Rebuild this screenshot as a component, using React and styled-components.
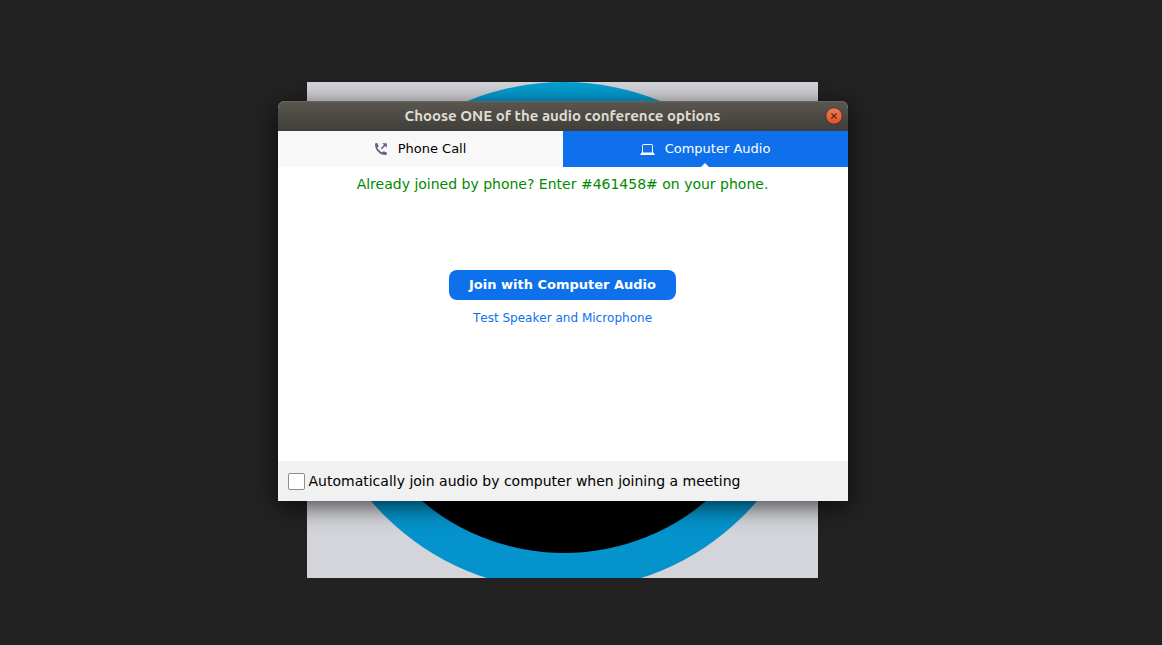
import React from "react";
import styled, { createGlobalStyle } from "styled-components";

const GlobalStyle = createGlobalStyle`
  * {
    box-sizing: border-box;
  }

  body {
    margin: 0;
    background: #222222;
    font-family: "DejaVu Sans", sans-serif;
    color: #000000;
  }

  button {
    font-family: inherit;
    border: 0;
    padding: 0;
    cursor: pointer;
  }
`;

const Page = styled.main`
  display: grid;
  grid-template-columns: minmax(0, 1fr);
  justify-items: center;
  align-items: start;
  min-height: 100vh;
  padding: 82px 37px 36px 0;
`;

const Avatar = styled.svg`
  grid-area: 1 / 1;
  display: block;
  width: 100%;
  max-width: 511px;
  height: auto;
`;

const Dialog = styled.section`
  grid-area: 1 / 1;
  z-index: 1;
  display: flex;
  flex-direction: column;
  width: 100%;
  max-width: 570px;
  margin-top: 19px;
  background: #ffffff;
  border-radius: 7px 7px 0 0;
  box-shadow: 0 5px 24px rgba(0, 0, 0, 0.7);
`;

const TitleBar = styled.header`
  display: grid;
  grid-template-columns: 24px 1fr 24px;
  align-items: center;
  height: 30px;
  padding: 0 2px;
  border-radius: 7px 7px 0 0;
  background: linear-gradient(#59574f, #403e39);
  box-shadow: inset 0 1px 0 #66645b;
`;

const Title = styled.h1`
  grid-column: 2;
  margin: 0;
  font: bold 15px/20px Ubuntu, "Open Sans", sans-serif;
  color: #dfdbd2;
  text-align: center;
`;

const CloseButton = styled.button`
  display: flex;
  justify-self: center;
  background: none;
`;

const Tabs = styled.div`
  display: grid;
  grid-template-columns: 1fr 1fr;
`;

const Tab = styled.button`
  position: relative;
  display: flex;
  align-items: center;
  justify-content: center;
  gap: 10px;
  height: 36px;
  font-size: 13px;
  line-height: 16px;
  color: ${(p) => (p.$active ? "#ffffff" : "#000000")};
  background: ${(p) => (p.$active ? "#0e71eb" : "#f8f8f8")};
`;

const Pointer = styled.svg`
  position: absolute;
  bottom: 0;
  left: 50%;
  margin-left: -4px;
`;

const Panel = styled.div`
  display: flex;
  flex-direction: column;
  align-items: center;
  min-height: 294px;
  padding: 8px 16px;
`;

const Notice = styled.p`
  margin: 0 0 77px;
  font-size: 14px;
  line-height: 18px;
  color: #008a00;
`;

const JoinButton = styled.button`
  height: 30px;
  padding: 0 20px;
  border-radius: 8px;
  background: #0e71eb;
  font-size: 13px;
  font-weight: bold;
  line-height: 16px;
  color: #ffffff;
`;

const TestLink = styled.a`
  margin-top: 10px;
  font-size: 12px;
  font-kerning: none;
  line-height: 16px;
  color: #0e71eb;
  text-decoration: none;
`;

const Footer = styled.footer`
  display: flex;
  align-items: center;
  height: 40px;
  padding: 0 10px;
  background: #f1f1f1;
`;

const CheckLabel = styled.label`
  display: flex;
  align-items: center;
  gap: 4px;
  font-size: 14px;
  line-height: 18px;
`;

const Checkbox = styled.input`
  appearance: none;
  width: 17px;
  height: 17px;
  margin: 0;
  border: 1px solid #8e8e8e;
  border-radius: 2px;
  background: #ffffff;

  &:checked {
    background: #0e71eb;
  }
`;

function RingPicture() {
  return (
    <Avatar viewBox="0 0 511 496" role="img" aria-label="Participant picture">
      <defs>
        <linearGradient id="ring" x1="0" y1="0" x2="0" y2="1">
          <stop offset="0" stopColor="#049fd3" />
          <stop offset="1" stopColor="#0492cb" />
        </linearGradient>
      </defs>
      <rect width="511" height="496" fill="#d4d5da" />
      <circle cx="257" cy="254" r="254" fill="url(#ring)" />
      <circle cx="257" cy="251" r="220" fill="#000000" />
    </Avatar>
  );
}

function PhoneIcon() {
  return (
    <svg width="14" height="14" viewBox="0 0 14 14" fill="none" aria-hidden="true">
      <path
        d="M1 1.9Q1 1.3 1.6 1.2L3.3 1 4.7 4.3 3.3 5.6C4.2 7.7 5.9 9.3 8.2 10.4L9.6 9.2 13 10.7 12.7 12.4Q12.6 13 12 13C5.6 13 1 8 1 1.9Z"
        fill="#62627a"
      />
      <path d="M7.3 6.7 11 3" stroke="#62627a" strokeWidth="1.6" />
      <path d="M8.2 1.2H12.8V5.8Z" fill="#62627a" />
    </svg>
  );
}

function LaptopIcon() {
  return (
    <svg width="15" height="12" viewBox="0 0 15 12" fill="none" aria-hidden="true">
      <path d="M2.5 10V2.3Q2.5 1.5 3.3 1.5H11.7Q12.5 1.5 12.5 2.3V10" stroke="#ffffff" />
      <path d="M1.5 9.5H13.5L15 12H0Z" fill="#ffffff" />
    </svg>
  );
}

function CloseIcon() {
  return (
    <svg width="18" height="18" viewBox="0 0 18 18" aria-hidden="true">
      <defs>
        <linearGradient id="close" x1="0" y1="0" x2="0" y2="1">
          <stop offset="0" stopColor="#f37b56" />
          <stop offset="1" stopColor="#e5501f" />
        </linearGradient>
      </defs>
      <circle cx="9" cy="9" r="8.2" fill="url(#close)" stroke="#35332e" strokeWidth="0.8" />
      <path d="M6.4 6.4 11.6 11.6M11.6 6.4 6.4 11.6" stroke="#3c281f" strokeWidth="1.2" />
    </svg>
  );
}

export default function App() {
  return (
    <>
      <GlobalStyle />
      <Page>
        <RingPicture />
        <Dialog role="dialog" aria-labelledby="dialog-title">
          <TitleBar>
            <Title id="dialog-title">Choose ONE of the audio conference options</Title>
            <CloseButton type="button" aria-label="Close">
              <CloseIcon />
            </CloseButton>
          </TitleBar>
          <Tabs role="tablist">
            <Tab type="button" role="tab" aria-selected="false">
              <PhoneIcon />
              Phone Call
            </Tab>
            <Tab type="button" role="tab" aria-selected="true" $active>
              <LaptopIcon />
              Computer Audio
              <Pointer width="8" height="4" viewBox="0 0 8 4" aria-hidden="true">
                <path d="M0 4 4 0 8 4Z" fill="#ffffff" />
              </Pointer>
            </Tab>
          </Tabs>
          <Panel role="tabpanel">
            <Notice>Already joined by phone? Enter #461458# on your phone.</Notice>
            <JoinButton type="button">Join with Computer Audio</JoinButton>
            <TestLink href="#test">Test Speaker and Microphone</TestLink>
          </Panel>
          <Footer>
            <CheckLabel>
              <Checkbox type="checkbox" />
              Automatically join audio by computer when joining a meeting
            </CheckLabel>
          </Footer>
        </Dialog>
      </Page>
    </>
  );
}
